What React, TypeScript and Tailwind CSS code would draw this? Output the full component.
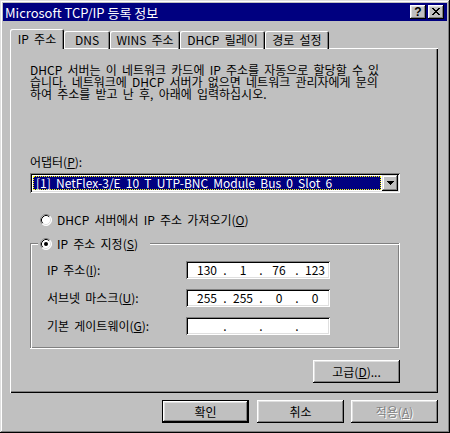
import React from "react";

const U = ({ children }: { children: React.ReactNode }) => (
  <span className="underline decoration-1 underline-offset-[1px]">{children}</span>
);

function Radio({ checked }: { checked?: boolean }) {
  return (
    <svg width="12" height="12" viewBox="0 0 12 12" className="shrink-0">
      <circle cx="6" cy="6" r="5.5" fill="#ffffff" />
      <path d="M2.11 9.89 A5.5 5.5 0 0 1 9.89 2.11" fill="none" stroke="#808080" strokeWidth="1" />
      <path d="M9.89 2.11 A5.5 5.5 0 0 1 2.11 9.89" fill="none" stroke="#ffffff" strokeWidth="1" />
      <path d="M2.82 9.18 A4.5 4.5 0 0 1 9.18 2.82" fill="none" stroke="#000000" strokeWidth="1" />
      <path d="M9.18 2.82 A4.5 4.5 0 0 1 2.82 9.18" fill="none" stroke="#dfdfdf" strokeWidth="1" />
      {checked && <circle cx="6" cy="6" r="2" fill="#000000" />}
    </svg>
  );
}

function IpBox({ parts }: { parts: string[] }) {
  return (
    <div className="w-[144px] h-[18px] bg-white flex items-center pl-[6px] shadow-[inset_1px_1px_0_#808080,inset_-1px_-1px_0_#ffffff,inset_2px_2px_0_#000000,inset_-2px_-2px_0_#dfdfdf]">
      <span className="w-[30px] text-center">{parts[0]}</span>
      <span className="w-[6px] text-center">.</span>
      <span className="w-[30px] text-center">{parts[1]}</span>
      <span className="w-[6px] text-center">.</span>
      <span className="w-[30px] text-center">{parts[2]}</span>
      <span className="w-[6px] text-center">.</span>
      <span className="w-[30px] text-center">{parts[3]}</span>
    </div>
  );
}

export default function App() {
  return (
    <div className="w-[450px] h-[433px] bg-[#c0c0c0] p-[3px] text-[12px] leading-[12px] text-black [word-spacing:2.5px] font-['Noto_Sans_CJK_KR',sans-serif] shadow-[inset_-1px_-1px_0_#000000,inset_1px_1px_0_#dfdfdf,inset_-2px_-2px_0_#808080,inset_2px_2px_0_#ffffff]">
      {/* Title bar */}
      <div className="h-[18px] bg-[#000080] flex items-center justify-between pl-[2px] pr-[3px] [word-spacing:0px]">
        <span className="text-white text-[13px] leading-[13px]">Microsoft TCP/IP 등록 정보</span>
        <div className="flex items-center gap-[2px]">
          <div className="w-[16px] h-[14px] bg-[#c0c0c0] flex items-center justify-center shadow-[inset_-1px_-1px_0_#000000,inset_1px_1px_0_#ffffff,inset_-2px_-2px_0_#808080,inset_2px_2px_0_#dfdfdf]">
            <span className="font-['Liberation_Sans',sans-serif] font-bold text-[12px] leading-[12px] mt-[-1px]">?</span>
          </div>
          <div className="w-[16px] h-[14px] bg-[#c0c0c0] flex items-center justify-center shadow-[inset_-1px_-1px_0_#000000,inset_1px_1px_0_#ffffff,inset_-2px_-2px_0_#808080,inset_2px_2px_0_#dfdfdf]">
            <svg width="8" height="7" viewBox="0 0 8 7" shapeRendering="crispEdges" className="mt-[-1px]">
              <path d="M0 0h2v1h-2zM6 0h2v1h-2zM1 1h2v1h-2zM5 1h2v1h-2zM2 2h4v1h-4zM3 3h2v1h-2zM2 4h4v1h-4zM1 5h2v1h-2zM5 5h2v1h-2zM0 6h2v1h-2zM6 6h2v1h-2z" fill="#000" />
            </svg>
          </div>
        </div>
      </div>

      <div className="pl-[7px] pt-[8px]">
        {/* Tabs */}
        <div className="flex items-end h-[20px]">
          <div className="relative z-10 w-[54px] h-[20px] bg-[#c0c0c0] flex items-center justify-center rounded-t-[2px] shadow-[inset_1px_1px_0_#ffffff,inset_-1px_0_0_#000000,inset_-2px_0_0_#808080] pb-[1px]">
            IP 주소
          </div>
          <div className="w-[46px] h-[18px] flex items-center justify-center rounded-t-[2px] shadow-[inset_1px_1px_0_#ffffff,inset_-1px_0_0_#000000,inset_-2px_0_0_#808080] pb-[1px]">
            DNS
          </div>
          <div className="w-[70px] h-[18px] flex items-center justify-center rounded-t-[2px] shadow-[inset_1px_1px_0_#ffffff,inset_-1px_0_0_#000000,inset_-2px_0_0_#808080] pb-[1px]">
            WINS 주소
          </div>
          <div className="w-[85px] h-[18px] flex items-center justify-center rounded-t-[2px] shadow-[inset_1px_1px_0_#ffffff,inset_-1px_0_0_#000000,inset_-2px_0_0_#808080] pb-[1px]">
            DHCP 릴레이
          </div>
          <div className="w-[64px] h-[18px] flex items-center justify-center rounded-t-[2px] shadow-[inset_1px_1px_0_#ffffff,inset_-1px_0_0_#000000,inset_-2px_0_0_#808080] pb-[1px]">
            경로 설정
          </div>
        </div>

        {/* Panel */}
        <div className="mt-[-1px] w-[428px] h-[345px] bg-[#c0c0c0] pl-[20px] pt-[16px] shadow-[inset_1px_1px_0_#ffffff,inset_-1px_-1px_0_#000000,inset_-2px_-2px_0_#808080]">
          <div className="w-[370px] flex flex-col">
            <p className="leading-[12px] h-[36px] whitespace-nowrap">
              DHCP 서버는 이 네트워크 카드에 IP 주소를 자동으로 할당할 수 있
              <br />
              습니다. 네트워크에 DHCP 서버가 없으면 네트워크 관리자에게 문의
              <br />
              하여 주소를 받고 난 후, 아래에 입력하십시오.
            </p>

            <div className="mt-[56px] h-[12px]">
              어댑터(<U>P</U>):
            </div>

            {/* Combo */}
            <div className="mt-[5px] w-[370px] h-[20px] bg-white p-[2px] flex shadow-[inset_1px_1px_0_#808080,inset_-1px_-1px_0_#ffffff,inset_2px_2px_0_#000000,inset_-2px_-2px_0_#dfdfdf]">
              <div className="flex-1 m-[1px] bg-[#000080] border border-dotted border-[#ffff00] flex items-center pl-[2px] text-white whitespace-nowrap">
                [1] NetFlex-3/E 10 T UTP-BNC Module Bus 0 Slot 6
              </div>
              <div className="w-[16px] h-[16px] bg-[#c0c0c0] flex items-center justify-center shadow-[inset_-1px_-1px_0_#000000,inset_1px_1px_0_#dfdfdf,inset_-2px_-2px_0_#808080,inset_2px_2px_0_#ffffff]">
                <svg width="7" height="4" viewBox="0 0 7 4" shapeRendering="crispEdges">
                  <path d="M0 0h7v1h-7zM1 1h5v1h-5zM2 2h3v1h-3zM3 3h1v1h-1z" fill="#000" />
                </svg>
              </div>
            </div>

            {/* Radio 1 */}
            <div className="mt-[19px] h-[16px] flex items-center pl-[10px] gap-[5px]">
              <Radio />
              <span>
                DHCP 서버에서 IP 주소 가져오기(<U>O</U>)
              </span>
            </div>

            {/* Group box */}
            <div className="relative mt-[15px] w-[370px] h-[106px] pt-[18px] pl-[17px] shadow-[inset_-1px_-1px_0_#ffffff,inset_1px_1px_0_#808080,inset_2px_2px_0_#ffffff,inset_-2px_-2px_0_#808080]">
              <div className="absolute left-[8px] top-[-7px] h-[16px] bg-[#c0c0c0] flex items-center pl-[2px] pr-[12px] gap-[5px]">
                <Radio checked />
                <span>
                  IP 주소 지정(<U>S</U>)
                </span>
              </div>

              <div className="flex items-center h-[18px]">
                <span className="w-[139px]">
                  IP 주소(<U>I</U>):
                </span>
                <IpBox parts={["130", "1", "76", "123"]} />
              </div>
              <div className="flex items-center h-[18px] mt-[10px]">
                <span className="w-[139px]">
                  서브넷 마스크(<U>U</U>):
                </span>
                <IpBox parts={["255", "255", "0", "0"]} />
              </div>
              <div className="flex items-center h-[18px] mt-[10px]">
                <span className="w-[139px]">
                  기본 게이트웨이(<U>G</U>):
                </span>
                <IpBox parts={["", "", "", ""]} />
              </div>
            </div>

            <div className="self-end mt-[11px] w-[87px] h-[23px] flex items-center justify-center shadow-[inset_-1px_-1px_0_#000000,inset_1px_1px_0_#ffffff,inset_-2px_-2px_0_#808080,inset_2px_2px_0_#dfdfdf]">
              고급(<U>D</U>)...
            </div>
          </div>
        </div>

        {/* Bottom buttons */}
        <div className="mt-[7px] w-[428px] flex justify-end">
          <div className="w-[87px] h-[23px] flex items-center justify-center shadow-[inset_0_0_0_1px_#000000,inset_-2px_-2px_0_#000000,inset_2px_2px_0_#ffffff,inset_-3px_-3px_0_#808080,inset_3px_3px_0_#dfdfdf]">
            확인
          </div>
          <div className="ml-[8px] w-[87px] h-[23px] flex items-center justify-center shadow-[inset_-1px_-1px_0_#000000,inset_1px_1px_0_#ffffff,inset_-2px_-2px_0_#808080,inset_2px_2px_0_#dfdfdf]">
            취소
          </div>
          <div className="ml-[7px] w-[87px] h-[23px] flex items-center justify-center text-[#808080] [text-shadow:1px_1px_0_#ffffff] shadow-[inset_-1px_-1px_0_#000000,inset_1px_1px_0_#ffffff,inset_-2px_-2px_0_#808080,inset_2px_2px_0_#dfdfdf]">
            적용(<U>A</U>)
          </div>
        </div>
      </div>
    </div>
  );
}
